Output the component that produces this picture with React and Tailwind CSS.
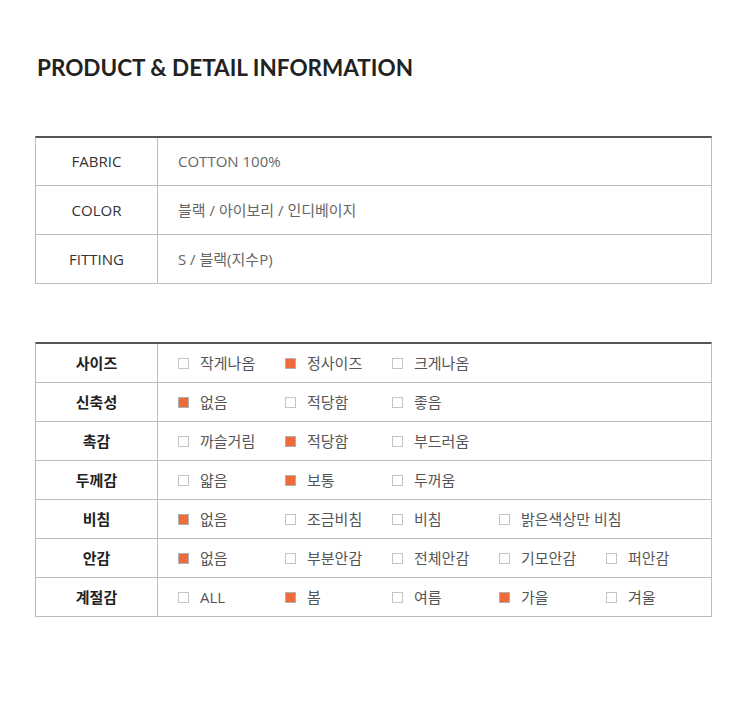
import React from "react";

const basicInfo = [
  { label: "FABRIC", value: "COTTON 100%" },
  { label: "COLOR", value: "블랙 / 아이보리 / 인디베이지" },
  { label: "FITTING", value: "S / 블랙(지수P)" },
];

const details = [
  { label: "사이즈", options: ["작게나옴", "정사이즈", "크게나옴"], checked: [1] },
  { label: "신축성", options: ["없음", "적당함", "좋음"], checked: [0] },
  { label: "촉감", options: ["까슬거림", "적당함", "부드러움"], checked: [1] },
  { label: "두께감", options: ["얇음", "보통", "두꺼움"], checked: [1] },
  { label: "비침", options: ["없음", "조금비침", "비침", "밝은색상만 비침"], checked: [0] },
  { label: "안감", options: ["없음", "부분안감", "전체안감", "기모안감", "퍼안감"], checked: [0] },
  { label: "계절감", options: ["ALL", "봄", "여름", "가을", "겨울"], checked: [1, 3] },
];

const font = {
  fontFamily: "'Open Sans', 'Noto Sans CJK KR', sans-serif",
};

const Checkbox = ({ on }) => (
  <span
    className={
      "inline-block w-[11px] h-[11px] shrink-0 border " +
      (on ? "bg-[#ef6c3a] border-[#b0b0b0]" : "bg-white border-[#c4c4c4]")
    }
  />
);

const App = () => {
  return (
    <div className="min-h-screen bg-white pl-[35px] pr-[38px] pt-[53px] pb-[97px]" style={font}>
      <h1 className="pl-[2px] text-[22.5px] leading-[30px] font-bold text-[#222] font-['Lato','Noto_Sans_CJK_KR',sans-serif]">
        PRODUCT &amp; DETAIL INFORMATION
      </h1>

      {/* basic info */}
      <div className="mt-[53px] border-t-2 border-t-[#555] border-x border-x-[#bdbdbd]">
        {basicInfo.map((row, idx) => (
          <div
            key={row.label}
            className={
              "flex border-b border-[#bdbdbd] text-[15px] " + (idx === 0 ? "h-[48px]" : "h-[49px]")
            }
          >
            <div className="w-[122px] shrink-0 flex items-center justify-center border-r border-[#bdbdbd] text-[#333]">
              {row.label}
            </div>
            <div className="flex items-center pl-[20px] text-[#666]">{row.value}</div>
          </div>
        ))}
      </div>

      {/* detail checks */}
      <div className="mt-[58px] border-t-2 border-t-[#555] border-x border-x-[#bdbdbd]">
        {details.map((row) => (
          <div key={row.label} className="flex h-[39px] border-b border-[#bdbdbd] text-[15px]">
            <div className="w-[122px] shrink-0 flex items-center justify-center border-r border-[#bdbdbd] font-bold text-[#222]">
              {row.label}
            </div>
            <div className="flex items-center pl-[20px] text-[#555]">
              {row.options.map((opt, i) => (
                <div key={opt} className="w-[107px] shrink-0 flex items-center gap-[11px] whitespace-nowrap">
                  <Checkbox on={row.checked.includes(i)} />
                  <span>{opt}</span>
                </div>
              ))}
            </div>
          </div>
        ))}
      </div>
    </div>
  );
};

export default App;
